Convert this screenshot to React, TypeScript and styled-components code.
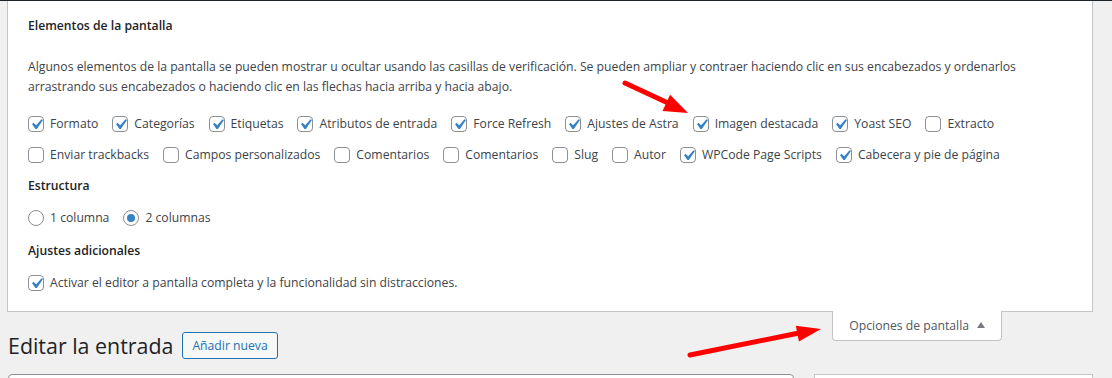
import React from "react";
import styled, { createGlobalStyle } from "styled-components";

const Global = createGlobalStyle`
  html, body { margin: 0; padding: 0; }
  body {
    background: #f0f0f1;
    font-family: "Open Sans", "Noto Sans", sans-serif;
    font-size: 12.2px;
    color: #3c434a;
    width: 1112px;
    height: 378px;
    overflow: hidden;
  }
  * { box-sizing: border-box; }
`;

const Page = styled.div`
  position: relative;
  width: 1112px;
  height: 378px;
  border-top: 1px solid #1d2327;
  overflow: hidden;
`;

const Panel = styled.div`
  margin: 0 19px 0 7px;
  background: #fff;
  border: 1px solid #c3c4c7;
  border-top: none;
  padding: 15px 20px 13px 20px;
`;

const Legend = styled.div<{ $mt?: number }>`
  font-weight: 600;
  line-height: 20px;
  color: #1d2327;
  margin-top: ${(p) => p.$mt ?? 0}px;
`;

const Para = styled.p`
  margin: 21px 0 11px;
  line-height: 20px;
  white-space: nowrap;
`;

const OptRow = styled.div<{ $mt?: number }>`
  display: flex;
  align-items: center;
  height: 31px;
  white-space: nowrap;
  margin-top: ${(p) => p.$mt ?? 0}px;
`;

const Item = styled.label`
  display: inline-flex;
  align-items: center;
  margin-right: 14px;
  line-height: 20px;
`;

const Box = styled.span`
  position: relative;
  width: 16px;
  height: 16px;
  border: 1px solid #8c8f94;
  border-radius: 4px;
  background: #fff;
  margin-right: 6px;
  flex: none;
`;

const Tick = styled.svg`
  position: absolute;
  left: -3px;
  top: -3px;
  width: 21px;
  height: 21px;
`;

const Radio = styled.span<{ $on?: boolean }>`
  width: 16px;
  height: 16px;
  border: 1px solid #8c8f94;
  border-radius: 50%;
  background: #fff;
  margin-right: 6px;
  flex: none;
  display: flex;
  align-items: center;
  justify-content: center;
  &::after {
    content: "";
    display: ${(p) => (p.$on ? "block" : "none")};
    width: 8px;
    height: 8px;
    border-radius: 50%;
    background: #3582c4;
  }
`;

const Header = styled.div`
  display: flex;
  justify-content: space-between;
  align-items: flex-start;
`;

const TitleGroup = styled.div`
  display: flex;
  align-items: center;
  margin: 19px 0 0 8px;
  height: 30px;
`;

const H1 = styled.h1`
  margin: 0;
  font-size: 21.4px;
  font-weight: 400;
  line-height: 30px;
  color: #1d2327;
`;

const AddNew = styled.button`
  margin-left: 9px;
  height: 27px;
  padding: 0 9px;
  border: 1px solid #2271b1;
  border-radius: 3px;
  background: #f6f7f7;
  color: #2271b1;
  font-family: inherit;
  font-size: 12.2px;
  font-weight: 500;
  margin-top: -1px;
`;

const ScreenTab = styled.div`
  position: relative;
  margin: -1px 110px 0 0;
  height: 30px;
  padding: 0 16px 0 16px;
  display: flex;
  align-items: center;
  gap: 8px;
  background: #fff;
  border: 1px solid #c3c4c7;
  border-top: none;
  border-radius: 0 0 4px 4px;
  color: #50575e;
`;

const Caret = styled.span`
  width: 0;
  height: 0;
  border-left: 4.5px solid transparent;
  border-right: 4.5px solid transparent;
  border-bottom: 6px solid #787c82;
  margin-top: -2px;
`;

const BoxRow = styled.div`
  display: flex;
  gap: 20px;
  margin: 13px 19px 0 8px;
`;

const TitleField = styled.div`
  flex: 0 0 786px;
  height: 30px;
  background: #fff;
  border: 1px solid #8c8f94;
  border-radius: 4px 4px 0 0;
`;

const SideBox = styled.div`
  flex: 1;
  height: 30px;
  background: #fff;
  border: 1px solid #c3c4c7;
`;

const Overlay = styled.svg`
  position: absolute;
  left: 0;
  top: 0;
  pointer-events: none;
`;

const Check = ({ on, label }: { on: boolean; label: string }) => (
  <Item>
    <Box>
      {on && (
        <Tick viewBox="0 0 20 20">
          <path
            d="M14.83 4.89l1.34.94-5.81 8.38H9.02L5.78 9.67l1.34-1.25 2.57 2.4z"
            fill="#3582c4"
          />
        </Tick>
      )}
    </Box>
    {label}
  </Item>
);

const row1: [string, boolean][] = [
  ["Formato", true],
  ["Categorías", true],
  ["Etiquetas", true],
  ["Atributos de entrada", true],
  ["Force Refresh", true],
  ["Ajustes de Astra", true],
  ["Imagen destacada", true],
  ["Yoast SEO", true],
  ["Extracto", false],
];

const row2: [string, boolean][] = [
  ["Enviar trackbacks", false],
  ["Campos personalizados", false],
  ["Comentarios", false],
  ["Comentarios", false],
  ["Slug", false],
  ["Autor", false],
  ["WPCode Page Scripts", true],
  ["Cabecera y pie de página", true],
];

export default function App() {
  return (
    <>
      <Global />
      <Page>
        <Panel>
          <Legend>Elementos de la pantalla</Legend>
          <Para>
            Algunos elementos de la pantalla se pueden mostrar u ocultar usando las casillas de
            verificación. Se pueden ampliar y contraer haciendo clic en sus encabezados y ordenarlos
            <br />
            arrastrando sus encabezados o haciendo clic en las flechas hacia arriba y hacia abajo.
          </Para>
          <OptRow>
            {row1.map(([l, c], i) => (
              <Check key={i} on={c} label={l} />
            ))}
          </OptRow>
          <OptRow>
            {row2.map(([l, c], i) => (
              <Check key={i} on={c} label={l} />
            ))}
          </OptRow>
          <Legend $mt={6}>Estructura</Legend>
          <OptRow $mt={6}>
            <Item>
              <Radio />1 columna
            </Item>
            <Item>
              <Radio $on />2 columnas
            </Item>
          </OptRow>
          <Legend $mt={8}>Ajustes adicionales</Legend>
          <OptRow $mt={6}>
            <Check on label="Activar el editor a pantalla completa y la funcionalidad sin distracciones." />
          </OptRow>
        </Panel>
        <Header>
          <TitleGroup>
            <H1>Editar la entrada</H1>
            <AddNew>Añadir nueva</AddNew>
          </TitleGroup>
          <ScreenTab>
            Opciones de pantalla
            <Caret />
          </ScreenTab>
        </Header>
        <BoxRow>
          <TitleField />
          <SideBox />
        </BoxRow>
        <Overlay width="1112" height="378" viewBox="0 0 1112 378">
          <line x1="625" y1="82" x2="668" y2="102" stroke="#ff0000" strokeWidth="5" strokeLinecap="round" />
          <polygon points="688,112 662.5,110 670.1,93.7" fill="#ff0000" />
          <line x1="690" y1="354" x2="799" y2="332" stroke="#ff0000" strokeWidth="5" strokeLinecap="round" />
          <polygon points="821,328 798.9,340.4 795.9,324.8" fill="#ff0000" />
        </Overlay>
      </Page>
    </>
  );
}
